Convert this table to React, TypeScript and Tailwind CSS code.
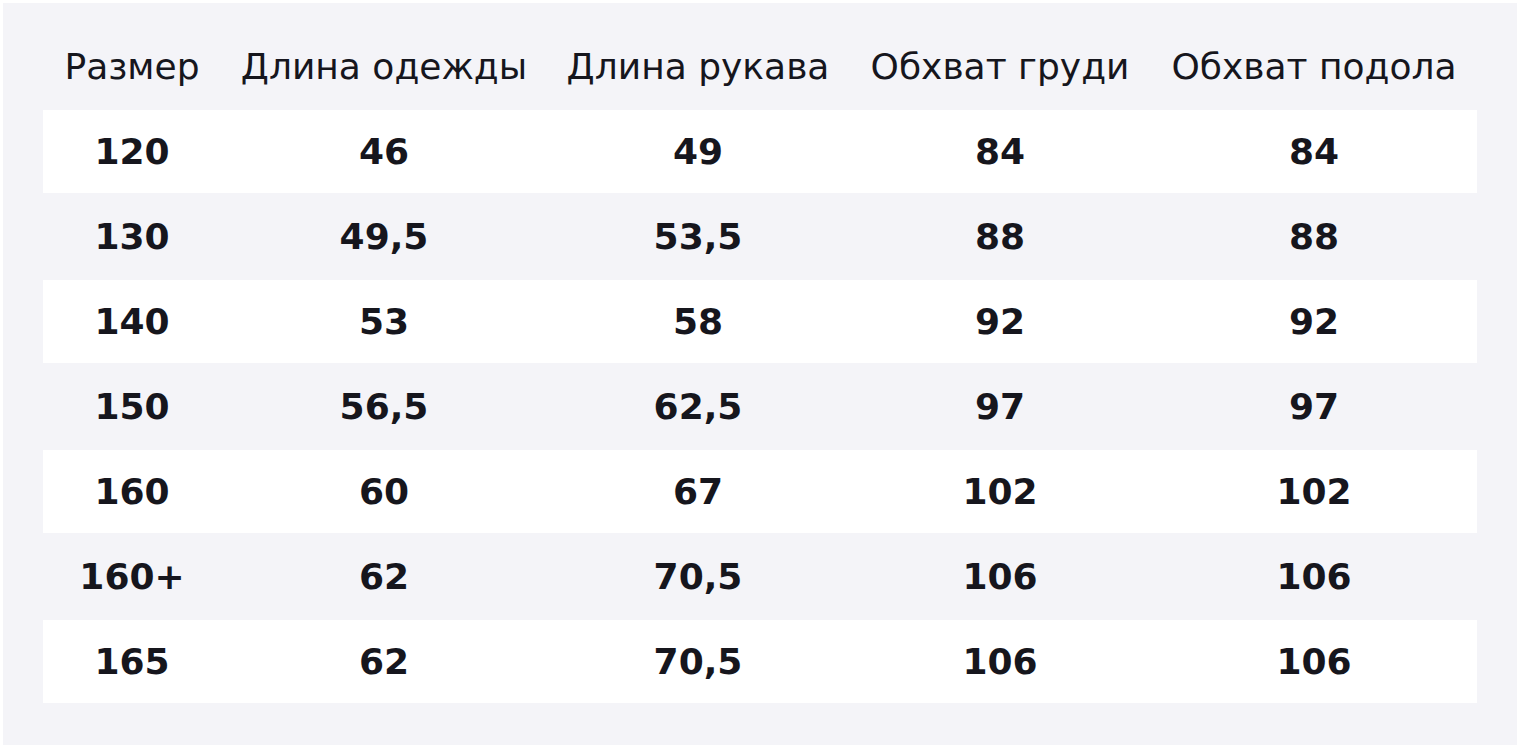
const HEADERS = [
  "Размер",
  "Длина одежды",
  "Длина рукава",
  "Обхват груди",
  "Обхват подола",
];

const ROWS = [
  ["120", "46", "49", "84", "84"],
  ["130", "49,5", "53,5", "88", "88"],
  ["140", "53", "58", "92", "92"],
  ["150", "56,5", "62,5", "97", "97"],
  ["160", "60", "67", "102", "102"],
  ["160+", "62", "70,5", "106", "106"],
  ["165", "62", "70,5", "106", "106"],
];

const COLS = "grid grid-cols-[178px_326px_302px_302px_326px]";

export default function App() {
  return (
    <div className="min-h-screen bg-white p-[3px] font-['DejaVu_Sans',sans-serif] text-[#16161d]">
      <div className="h-[742px] bg-[#f4f4f8] px-10 pt-5">
        <div className={`${COLS} h-[87px] items-center text-[36px]`}>
          {HEADERS.map((h) => (
            <div key={h} className="text-center whitespace-nowrap">
              {h}
            </div>
          ))}
        </div>

        {ROWS.map((row, i) => (
          <div
            key={i}
            className={
              i % 2 === 0
                ? `${COLS} h-[83px] items-center bg-white text-[36px] font-bold`
                : `${COLS} h-[87px] items-center text-[36px] font-bold`
            }
          >
            {row.map((cell, j) => (
              <div key={j} className="text-center">
                {cell}
              </div>
            ))}
          </div>
        ))}
      </div>
    </div>
  );
}
